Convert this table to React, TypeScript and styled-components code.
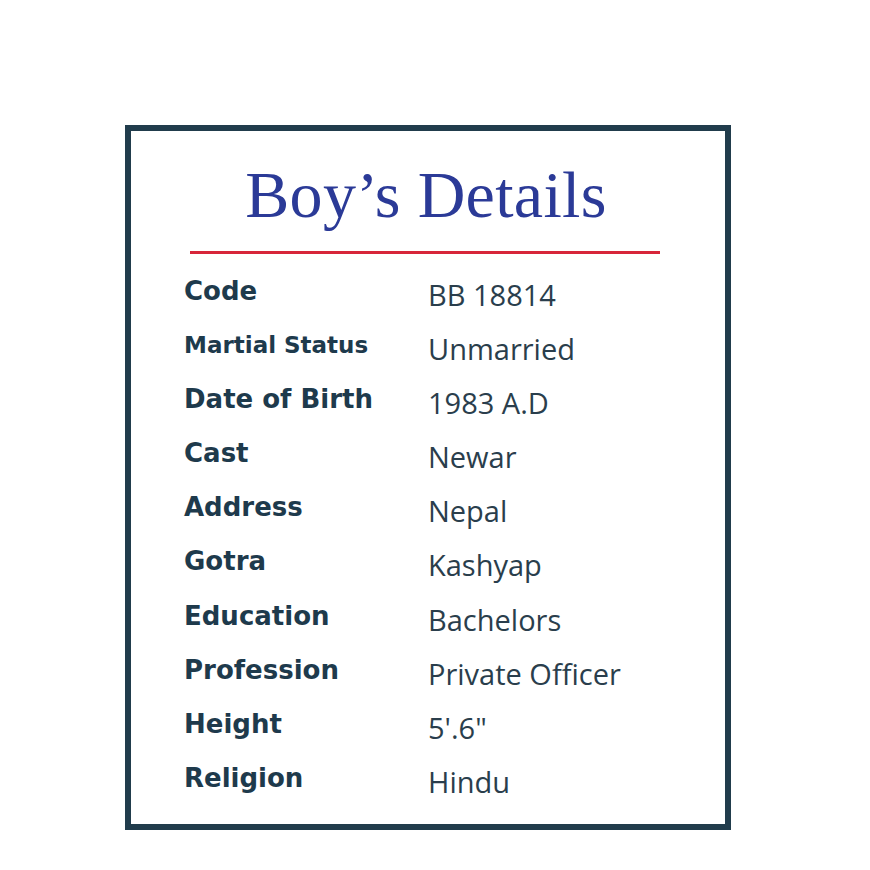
import React from "react";
import styled, { createGlobalStyle } from "styled-components";

const Global = createGlobalStyle`
  html, body { margin: 0; padding: 0; background: #ffffff; }
  body { font-family: "Open Sans", sans-serif; }
`;

const Page = styled.div`
  width: 870px;
  height: 870px;
  padding: 125px 0 0 125px;
  box-sizing: border-box;
`;

const Card = styled.section`
  width: 606px;
  height: 705px;
  box-sizing: border-box;
  border: 6px solid #213c4c;
  display: flex;
  flex-direction: column;
  align-items: center;
`;

const Title = styled.h1`
  margin: 29px 4px 0 0;
  flex-shrink: 0;
  font-family: "Liberation Serif", serif;
  font-weight: 400;
  font-size: 66px;
  line-height: 70px;
  color: #2b3a97;
  letter-spacing: 0.3px;
`;

const Rule = styled.div`
  flex-shrink: 0;
  width: 470px;
  height: 3px;
  background: #d7263a;
  margin: 21px 6px 0 0;
`;

const Rows = styled.div`
  width: 100%;
  padding: 24px 0 0 53px;
  box-sizing: border-box;
  display: flex;
  flex-direction: column;
`;

const Row = styled.div`
  display: grid;
  grid-template-columns: 244px 1fr;
  height: 54.1px;
  flex-shrink: 0;
`;

const Label = styled.div<{ $small?: boolean }>`
  font-family: "DejaVu Sans", sans-serif;
  font-weight: 700;
  font-size: ${(p) => (p.$small ? "23px" : "26px")};
  line-height: 1;
  color: #1e3a4c;
  padding-top: ${(p) => (p.$small ? "2px" : "0px")};
`;

const Value = styled.div`
  font-family: "Open Sans", sans-serif;
  font-weight: 400;
  font-size: 29px;
  line-height: 1;
  color: #2a3e4c;
  padding-top: 2px;
`;

const rows: [string, string, boolean?][] = [
  ["Code", "BB 18814"],
  ["Martial Status", "Unmarried", true],
  ["Date of Birth", "1983 A.D"],
  ["Cast", "Newar"],
  ["Address", "Nepal"],
  ["Gotra", "Kashyap"],
  ["Education", "Bachelors"],
  ["Profession", "Private Officer"],
  ["Height", "5'.6\""],
  ["Religion", "Hindu"],
];

export default function App() {
  return (
    <>
      <Global />
      <Page>
        <Card>
          <Title>Boy’s Details</Title>
          <Rule />
          <Rows>
            {rows.map(([l, v, s]) => (
              <Row key={l}>
                <Label $small={s}>{l}</Label>
                <Value>{v}</Value>
              </Row>
            ))}
          </Rows>
        </Card>
      </Page>
    </>
  );
}
